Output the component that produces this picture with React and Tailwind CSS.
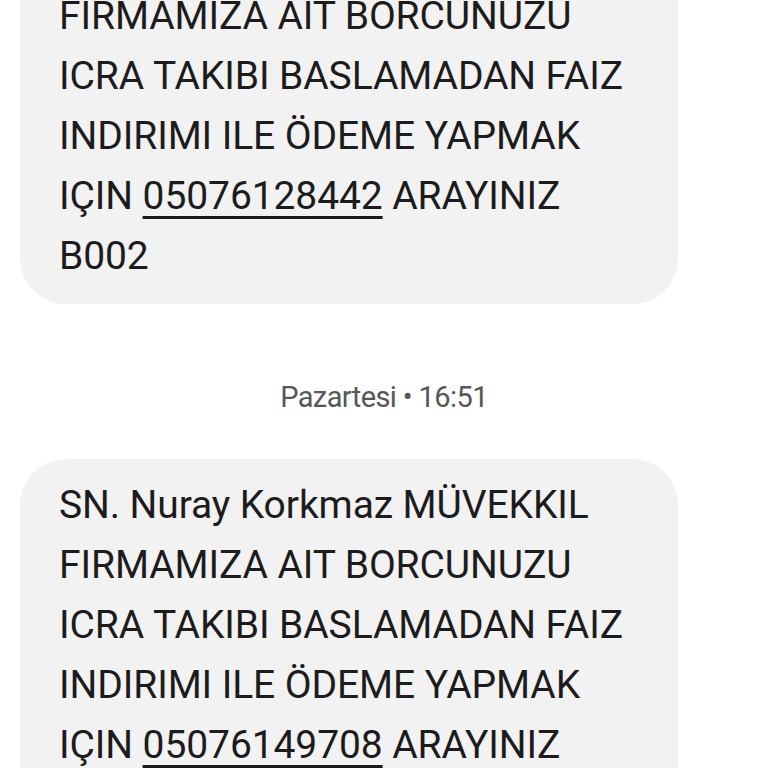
import React from 'react'

const firstMsg = {
  phone: '05076128442',
}
const secondMsg = {
  phone: '05076149708',
}

function Bubble({ phone, className = '' }) {
  return (
    <div
      className={
        'ml-[20px] w-[658px] rounded-[46px] bg-[#f2f2f2] pl-[39px] pr-4 pt-[16px] pb-[18px] text-[39px] leading-[60px] tracking-[-0.1px] text-[#1c1c1c] ' +
        className
      }
    >
      <div>SN. Nuray Korkmaz MÜVEKKIL</div>
      <div>FIRMAMIZA AIT BORCUNUZU</div>
      <div>ICRA TAKIBI BASLAMADAN FAIZ</div>
      <div>INDIRIMI ILE ÖDEME YAPMAK</div>
      <div>
        IÇIN{' '}
        <span className="underline decoration-[3px] underline-offset-[7px]">{phone}</span>{' '}
        ARAYINIZ
      </div>
      <div>B002</div>
    </div>
  )
}

export default function App() {
  return (
    <div
      className="h-[768px] w-[768px] overflow-hidden bg-white"
      style={{ fontFamily: 'Roboto, "Noto Sans", sans-serif' }}
    >
      <Bubble phone={firstMsg.phone} className="-mt-[90px]" />
      <div className="mt-[79px] mb-[47px] text-center text-[29px] leading-[29px] tracking-[-0.6px] text-[#575757]">
        Pazartesi • 16:51
      </div>
      <Bubble phone={secondMsg.phone} />
    </div>
  )
}
